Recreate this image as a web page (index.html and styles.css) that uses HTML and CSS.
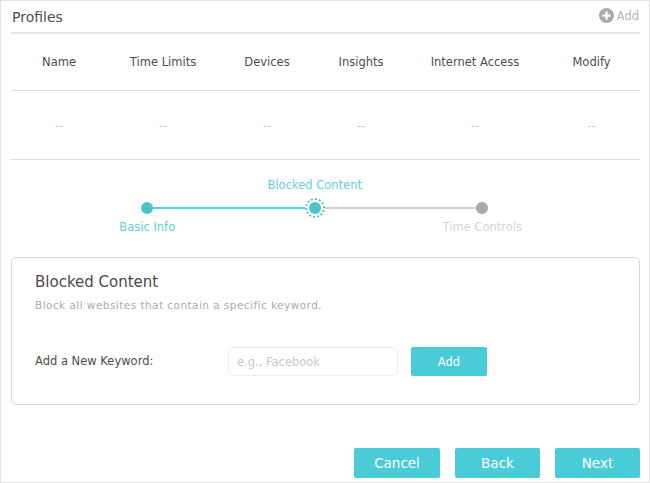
FILE: index.html
```html
<!DOCTYPE html>
<html lang="en">
<head>
<meta charset="utf-8">
<title>Profiles</title>
<link rel="stylesheet" href="styles.css">
</head>
<body>
<main class="page">
  <header class="head">
    <h1 class="head-title">Profiles</h1>
    <a class="head-add">
      <svg class="add-icon" viewBox="0 0 16 16" width="16" height="16" aria-hidden="true"><circle cx="8" cy="8" r="8" fill="#a9a9ab"/><path d="M8 3.6v8.8M3.6 8h8.8" stroke="#fff" stroke-width="2.4"/></svg>
      <span>Add</span>
    </a>
  </header>
  <div class="table-row table-head">
    <div>Name</div><div>Time Limits</div><div>Devices</div><div>Insights</div><div>Internet Access</div><div>Modify</div>
  </div>
  <div class="table-row table-body">
    <div>--</div><div>--</div><div>--</div><div>--</div><div>--</div><div>--</div>
  </div>
  <section class="stepper">
    <div class="step-top">Blocked Content</div>
    <div class="track">
      <span class="dot done"></span>
      <span class="line done"></span>
      <span class="dot-ring"><span class="dot done"></span></span>
      <span class="line"></span>
      <span class="dot"></span>
    </div>
    <div class="step-bottom done-text">Basic Info</div>
    <div class="step-bottom todo-text">Time Controls</div>
  </section>
  <section class="card">
    <h2 class="card-title">Blocked Content</h2>
    <p class="card-desc">Block all websites that contain a specific keyword.</p>
    <div class="field">
      <label class="field-label" for="kw">Add a New Keyword:</label>
      <input class="field-input" id="kw" type="text" placeholder="e.g., Facebook">
      <button class="btn btn-small" type="button">Add</button>
    </div>
  </section>
  <footer class="actions">
    <button class="btn btn-large btn-cancel" type="button">Cancel</button>
    <button class="btn btn-large btn-back" type="button">Back</button>
    <button class="btn btn-large btn-next" type="button">Next</button>
  </footer>
</main>
</body>
</html>
```
FILE: styles.css
```css
* { box-sizing: border-box; }
html, body { margin: 0; padding: 0; background: #fff; }
body { font-family: "DejaVu Sans", Verdana, sans-serif; color: #4a4a4a; }
.page {
  width: 650px; height: 483px;
  border: 1px solid #e2e2e2;
  padding: 0 9px 0 10px;
  overflow: hidden;
}
.head {
  height: 33px; display: flex; justify-content: space-between;
  border-bottom: 2px solid #e6e6e6;
}
.head-title { margin: 8px 0 0 1px; font-size: 14px; line-height: 16px; font-weight: 400; color: #4d4d4d; }
.head-add { display: flex; align-items: flex-start; gap: 3px; padding: 7px 1px 0 0; font-size: 11.5px; line-height: 16px; color: #b4b4b6; }
.add-icon { display: block; width: 15px; height: 15px; }
.table-row {
  display: grid; grid-template-columns: 96px 112px 96px 92px 136px 97px;
  align-items: center; text-align: center;
  border-bottom: 1px solid #dcdcdc;
}
.table-head { height: 57px; font-size: 11.5px; color: #4d4d4d; }
.table-body { height: 69px; font-size: 11px; color: #c4c4c4; }
.stepper {
  display: grid; grid-template-columns: repeat(3, 167.5px);
  margin-left: 52.5px; height: 97px; padding-top: 18px;
  grid-template-rows: 14px 26px 16px;
  text-align: center; font-size: 11.5px; color: #62d0dc;
}
.step-top { grid-column: 2; grid-row: 1; white-space: nowrap; }
.track {
  grid-column: 1 / -1; grid-row: 2;
  display: flex; align-items: center;
  padding: 0 78px 0 77.5px; margin-top: 6px;
}
.step-bottom { grid-row: 3; white-space: nowrap; padding-top: 2px; }
.done-text { grid-column: 1; }
.todo-text { grid-column: 3; color: #d4d4d6; }
.dot { display: block; flex: none; width: 12px; height: 12px; border-radius: 50%; background: #a9a9ad; }
.dot.done { background: #4dc3cf; }
.line { flex: 1; height: 2px; background: #cfcfd1; }
.line.done { background: #4fd6e2; }
.dot-ring {
  flex: none; width: 20px; height: 20px; border-radius: 50%;
  border: 2px dotted #4dc3cf; display: flex; align-items: center; justify-content: center;
}
.card {
  height: 148px; border: 1px solid #d9d9d9; border-radius: 5px;
  padding: 15px 23px 0;
  width: 629px;
}
.card-title { margin: 0; font-size: 15px; line-height: 18px; font-weight: 400; color: #4a4a4a; }
.card-desc { margin: 7px 0 0; font-size: 10.5px; line-height: 14px; letter-spacing: .45px; color: #ababad; white-space: nowrap; }
.field { display: flex; align-items: center; margin-top: 35px; }
.field-label { width: 193px; font-size: 11.5px; color: #4d4d4d; padding-bottom: 2px; }
.field-input {
  width: 170px; height: 29px; border: 1px solid #ececec; border-radius: 5px;
  padding: 0 8px; font: 11.5px "DejaVu Sans", Verdana, sans-serif; outline: none;
}
.field-input::placeholder { color: #c8c8c8; opacity: 1; }
.btn {
  border: 0; border-radius: 2px; background: #4acbd8; color: #fff;
  font-family: "DejaVu Sans", Verdana, sans-serif; padding: 0;
}
.btn-small { width: 76px; height: 29px; margin-left: 13px; font-size: 11.5px; }
.actions { display: flex; justify-content: flex-end; margin-top: 43px; width: 629px; }
.btn-large { height: 30px; font-size: 13.5px; }
.btn-cancel { width: 86px; }
.btn-back { width: 85px; margin-left: 15px; }
.btn-next { width: 85px; margin-left: 15px; }
```
